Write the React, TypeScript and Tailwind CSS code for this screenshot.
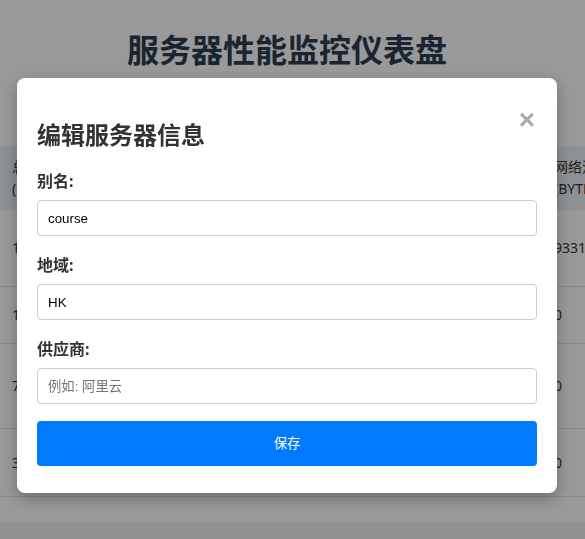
import { useState } from "react";

interface ServerRow {
  memory: string;
  cpu: string;
  disk: string;
  uptime: string;
  status: string;
  network: string;
  height: string;
}

const rows: ServerRow[] = [
  { memory: "16384", cpu: "12.5%", disk: "41.2%", uptime: "12天", status: "在线", network: "93312", height: "h-[77px]" },
  { memory: "1024", cpu: "3.1%", disk: "22.8%", uptime: "5天", status: "在线", network: "0", height: "h-[57px]" },
  { memory: "7982", cpu: "8.4%", disk: "63.0%", uptime: "31天", status: "在线", network: "0", height: "h-[85px]" },
  { memory: "3951", cpu: "1.2%", disk: "15.7%", uptime: "2天", status: "离线", network: "0", height: "h-[68px]" },
];

const cols = "grid grid-cols-[80px_100px_100px_100px_162px_110px] w-[652px]";

function ServerTable() {
  return (
    <div className="w-[585px] overflow-hidden">
      <div className={`${cols} h-[64px] items-center bg-[#edf2f7] text-[14px] leading-[22px] text-[#333]`}>
        <div className="px-3">总内存 (MB)</div>
        <div className="px-3">CPU 使用率</div>
        <div className="px-3">磁盘使用率</div>
        <div className="px-3">运行时间</div>
        <div className="px-3">状态</div>
        <div className="px-3">网络流量 (BYTES)</div>
      </div>
      {rows.map((row, i) => (
        <div
          key={i}
          className={`${cols} ${row.height} items-center border-b border-[#dee2e6] text-[14px] leading-[22px] text-[#333]`}
        >
          <div className="px-3">{row.memory}</div>
          <div className="px-3">{row.cpu}</div>
          <div className="px-3">{row.disk}</div>
          <div className="px-3">{row.uptime}</div>
          <div className="px-3">{row.status}</div>
          <div className="px-3">{row.network}</div>
        </div>
      ))}
    </div>
  );
}

function EditServerModal() {
  const [alias, setAlias] = useState("course");
  const [region, setRegion] = useState("HK");
  const [provider, setProvider] = useState("");

  const fields = [
    { label: "别名:", value: alias, onChange: setAlias, placeholder: "" },
    { label: "地域:", value: region, onChange: setRegion, placeholder: "" },
    { label: "供应商:", value: provider, onChange: setProvider, placeholder: "例如: 阿里云" },
  ];

  return (
    <div className="fixed inset-0 flex items-start bg-black/40 pt-[78px] pl-[17px]">
      <div className="relative flex w-[540px] flex-col rounded-lg bg-white p-[20px] pb-[27px] shadow-[0_5px_15px_rgba(0,0,0,0.3)]">
        <span className="absolute top-[28px] right-[22px] cursor-pointer font-['Liberation_Sans',sans-serif] text-[28px] leading-[28px] font-bold text-[#aaa]">
          ×
        </span>
        <h2 className="mt-[21px] mb-[19px] text-[24px] leading-[32px] font-bold text-[#333]">
          编辑服务器信息
        </h2>
        {fields.map((field) => (
          <div key={field.label} className="mb-[18px] flex flex-col">
            <label className="mb-[8px] text-[16px] leading-[22px] font-bold text-[#333]">
              {field.label}
            </label>
            <input
              value={field.value}
              onChange={(e) => field.onChange(e.target.value)}
              placeholder={field.placeholder}
              className="h-[36px] w-full rounded-[4px] border border-[#ccc] px-[10px] font-['Liberation_Sans','Noto_Sans_CJK_SC',sans-serif] text-[13.333px] text-black outline-none placeholder:text-[#757575]"
            />
          </div>
        ))}
        <button className="-mt-[1px] h-[45px] w-full cursor-pointer rounded-[4px] bg-[#007bff] font-['Liberation_Sans','Noto_Sans_CJK_SC',sans-serif] text-[13.333px] text-white">
          保存
        </button>
      </div>
    </div>
  );
}

export default function App() {
  return (
    <div className="min-h-[539px] bg-[#f0f2f5] font-['Noto_Sans','Noto_Sans_CJK_SC',sans-serif]">
      <div className="bg-white pb-[25px]">
        <h1 className="w-[574px] pt-[30px] pb-[76px] text-center text-[32px] leading-[40px] font-bold text-[#2c3e50]">
          服务器性能监控仪表盘
        </h1>
        <ServerTable />
      </div>
      <EditServerModal />
    </div>
  );
}
